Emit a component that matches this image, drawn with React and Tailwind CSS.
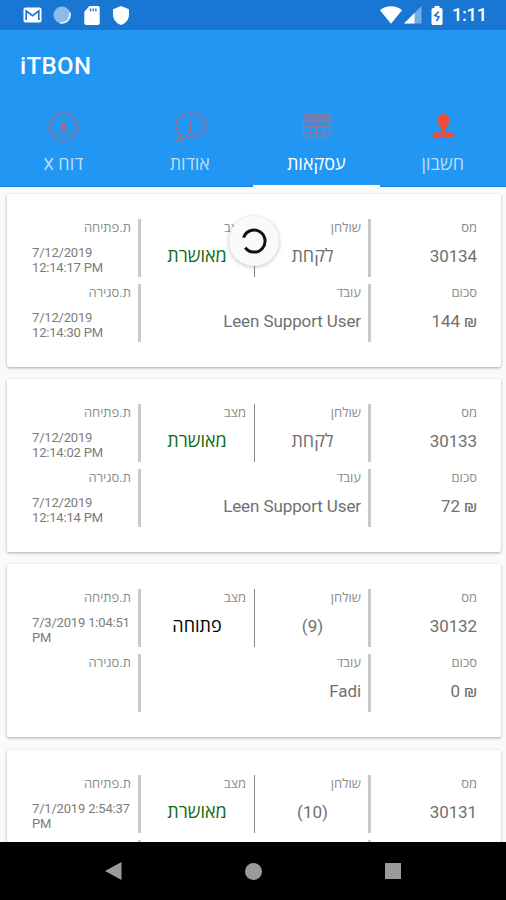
const transactions = [
  { id: "30134", table: "לקחת", status: "מאושרת", opened: ["7/12/2019", "12:14:17 PM"], closed: ["7/12/2019", "12:14:30 PM"], user: "Leen Support User", total: "144" },
  { id: "30133", table: "לקחת", status: "מאושרת", opened: ["7/12/2019", "12:14:02 PM"], closed: ["7/12/2019", "12:14:14 PM"], user: "Leen Support User", total: "72" },
  { id: "30132", table: "(9)", status: "פתוחה", opened: ["7/3/2019 1:04:51", "PM"], closed: [], user: "Fadi", total: "0" },
  { id: "30131", table: "(10)", status: "מאושרת", opened: ["7/1/2019 2:54:37", "PM"] },
]

function StatusBar() {
  return (
    <div className="flex h-[30px] shrink-0 items-center justify-between bg-[#1976d2] pl-[23px] pr-[20px] text-white">
      <div className="flex items-center gap-[11px]">
        {/* Mail */}
        <svg width="19" height="16" viewBox="0 0 19 16">
          <rect x="0.5" y="0.5" width="18" height="15" rx="2" fill="#fff" />
          <path d="M3.2 13V4l6.3 4.6L15.8 4v9" fill="none" stroke="#1976d2" strokeWidth="1.7" />
        </svg>
        <svg width="18" height="18" viewBox="0 0 18 18">
          <circle cx="9" cy="9" r="8.5" fill="#8bbbe9" />
          <path d="M16.6 6.5A8 8 0 0 1 7 16.6" fill="none" stroke="#e3effb" strokeWidth="1.8" />
        </svg>
        {/* SD card */}
        <svg className="ml-[2px]" width="16" height="19" viewBox="0 0 16 19">
          <path d="M5.5 0H14a1.7 1.7 0 0 1 1.7 1.7v15.6A1.7 1.7 0 0 1 14 19H2a1.7 1.7 0 0 1-1.7-1.7V5.7z" fill="#fff" />
          <path d="M6.500 2.500v2.800M9.200 2.500v2.800M11.900 2.500v2.800" stroke="#1976d2" strokeWidth="1.400" />
        </svg>
        <svg className="ml-[2px]" width="16" height="19" viewBox="0 0 16 19">
          <path d="M8 0l8 3.200v5.600c0 4.700-3.400 8.700-8 10.200-4.600-1.500-8-5.500-8-10.200V3.200z" fill="#fff" />
        </svg>
      </div>
      <div className="flex items-center">
        <svg width="22" height="18" viewBox="0 0 22 18">
          <path d="M0 4.200C3 1.600 6.700.2 11 .2s8 1.400 11 4L11 17.800z" fill="#fff" />
        </svg>
        <svg className="ml-[2px]" width="18" height="18" viewBox="0 0 18 18">
          <path d="M17.500 0v17.500H0z" fill="#76ade4" />
          <path d="M10.500 7v10.500H0z" fill="#fff" />
        </svg>
        {/* Battery */}
        <svg className="ml-[9px]" width="12" height="19" viewBox="0 0 12 19">
          <path d="M3.500 0h5v2H10a1.500 1.500 0 0 1 1.500 1.500v14A1.500 1.500 0 0 1 10 19H2a1.500 1.500 0 0 1-1.500-1.500v-14A1.500 1.500 0 0 1 2 2h1.500z" fill="#fff" />
          <path d="M7.800 5.500L3.800 9.500l4.200 1.500-2.500 4" fill="none" stroke="#1976d2" strokeWidth="1.600" />
        </svg>
        <span className="ml-[9px] w-[34px] whitespace-nowrap text-[18.5px] leading-[30px] font-medium tracking-[-0.4px]">1:11</span>
      </div>
    </div>
  )
}

function ReportIcon() {
  return (
    <svg width="30" height="30" viewBox="0 0 30 30" fill="none" stroke="#a96d85">
      <circle cx="15.500" cy="14.500" r="13.500" strokeWidth="1.500" />
      <path d="M12.200 9.500l6.600 10.500M19 9.500l-7 10.500" strokeWidth="2" />
      <path d="M10.800 9.300h3M17.500 9.300h2.800M10.800 20.200h2.800M17.200 20.200h3.200" strokeWidth="1.200" />
    </svg>
  )
}

function AboutIcon() {
  return (
    <svg width="32" height="30" viewBox="0 0 32 30" fill="none" stroke="#a96d85">
      <path d="M6.500 22.800C3.300 20.500 1.600 17.600 1.600 14 1.600 6.600 8 1.300 16.200 1.300S30.800 6.600 30.800 13.500 24.500 25.300 16.500 25.300c-1.500 0-3 0-4.400-.4-2.700 2.400-6 3.200-10 3.500 2.700-1.300 4-3 4.400-5.600z" strokeWidth="1.500" />
      <circle cx="16.400" cy="9.500" r="1.600" fill="#a96d85" stroke="none" />
      <path d="M14.800 13.200h1.700v7M14.500 20.200h4" strokeWidth="1.800" />
    </svg>
  )
}

function TableIcon() {
  return (
    <svg width="30" height="30" viewBox="0 0 30 30" fill="none" stroke="#8b7ba5">
      <rect x="2.500" y="3" width="26.500" height="22.500" rx="1.500" strokeWidth="1.300" />
      <path d="M3 3.500h25.500v5.500H3z" fill="#727fb5" stroke="none" />
      <path d="M3 9.500h26M3 14.700h26M3 20h26M9 9.500v16M15.700 9.500v16M22.300 9.500v16" strokeWidth="1.300" />
      <path d="M8 14.700h2M14.700 14.700h2M21.300 14.700h2M8 20h2M14.700 20h2M21.300 20h2" stroke="#a96d85" strokeWidth="1.600" />
    </svg>
  )
}

function AccountIcon() {
  return (
    <svg width="30" height="30" viewBox="0 0 30 30" fill="#e94f3a">
      <path d="M15.500 2c3.600 0 5.800 2.500 5.800 6 0 3.300-1.500 6.300-3.300 8.300v3c0 .8.600 1.400 1.500 1.700h-8c.9-.3 1.500-.9 1.500-1.700v-3C11.200 14.300 9.700 11.300 9.700 8c0-3.500 2.200-6 5.800-6z" />
      <path d="M4 26c0-3.800 2.300-5.400 6.700-5.900 1.300 1.800 2.900 2.500 4.800 2.500s3.500-.7 4.800-2.500c4.400.5 6.700 2.100 6.700 5.900z" />
    </svg>
  )
}

const tabs = [
  { label: <><span>דוח </span><span className="text-[17px] font-normal">X</span></>, key: "report", icon: <ReportIcon /> },
  { label: "אודות", key: "about", icon: <AboutIcon /> },
  { label: "עסקאות", key: "transactions", icon: <TableIcon />, active: true },
  { label: "חשבון", key: "account", icon: <AccountIcon /> },
]

function Header() {
  return (
    <header className="relative z-10 h-[157px] shrink-0 border-b border-[#1480e8] bg-[#2196f3]">
      <h1 className="h-[73px] pl-[20px] text-[24px] leading-[72px] font-medium tracking-[0.4px] text-white">iTBON</h1>
      <nav className="grid h-[85px] grid-cols-4">
        {tabs.map((tab) => (
          <button key={tab.key} className={`flex flex-col items-center border-b-[3px] pt-[9px] ${tab.active ? "border-white text-white" : "border-transparent text-[#b9defb]"}`}>
            {tab.icon}
            <span dir="rtl" className="mt-[9px] text-[18px] leading-[26px] font-medium">{tab.label}</span>
          </button>
        ))}
      </nav>
    </header>
  )
}

function Label({ children }) {
  return <div dir="rtl" className="h-[18px] text-[13px] leading-[18px] text-[#8c8c8c]">{children}</div>
}

function Value({ children }) {
  return <div className="pt-[6px] text-[17px] leading-[26px] tracking-[-0.1px] text-[#707070]">{children}</div>
}

function DateCell({ label, lines }) {
  return (
    <div className="border-r-[3px] border-[#cacaca] pr-[7px]">
      <Label>{label}</Label>
      <div className="pt-[8px] text-[13px] leading-[15px] tracking-[-0.18px] whitespace-nowrap text-[#7c7c7c]">
        {lines.map((line) => <div key={line}>{line}</div>)}
      </div>
    </div>
  )
}

function TransactionCard({ item }) {
  const statusColor = item.status === "פתוחה" ? "text-black" : "text-[#106b10]"
  const tableSize = item.table.startsWith("(") ? "text-[17px]" : "text-[18px]"

  return (
    <article className="h-[173px] shrink-0 rounded-[2px] bg-white pt-[25px] pr-[24px] pl-[25px] shadow-[0_1px_3px_rgba(0,0,0,0.32)]">
      <div className="grid h-[58px] grid-cols-[109px_114px_116px_1fr]">
        <DateCell label="ת.פתיחה" lines={item.opened} />
        <div className="border-r border-[#888] pr-[8px]">
          <Label>מצב</Label>
          <div className={`pt-[6px] pl-[7px] text-center text-[18px] leading-[26px] ${statusColor}`}>{item.status}</div>
        </div>
        <div className="border-r-[3px] border-[#cacaca] pr-[7px]">
          <Label>שולחן</Label>
          <div className={`pt-[6px] pl-[9px] text-center leading-[26px] text-[#707070] ${tableSize}`}>{item.table}</div>
        </div>
        <div className="text-right">
          <Label>מס</Label>
          <Value>{item.id}</Value>
        </div>
      </div>
      {item.user ? (
        <div className="mt-[7px] grid h-[58px] grid-cols-[109px_230px_1fr]">
          <DateCell label="ת.סגירה" lines={item.closed} />
          <div className="border-r-[3px] border-[#cacaca] pr-[7px] text-right">
            <Label>עובד</Label>
            <Value>{item.user}</Value>
          </div>
          <div className="text-right">
            <Label>סכום</Label>
            <Value>{item.total} ₪</Value>
          </div>
        </div>
      ) : (
        <div className="mt-[7px] grid h-[58px] grid-cols-[109px_230px_1fr]">
          <div className="border-r-[3px] border-[#cacaca]" />
          <div className="border-r-[3px] border-[#cacaca]" />
        </div>
      )}
    </article>
  )
}

export default function App() {
  return (
    <div className="relative flex h-[900px] w-[506px] flex-col overflow-hidden bg-[#fafafa] font-[Roboto,'Open_Sans',sans-serif]">
      <StatusBar />
      <Header />
      <main className="flex min-h-0 flex-1 flex-col gap-[12.2px] overflow-hidden pt-[7px] pr-[5px] pl-[7px]">
        {transactions.map((item) => <TransactionCard key={item.id} item={item} />)}
      </main>

      {/* Refresh spinner floats over the list */}
      <div className="absolute top-[216px] left-[229px] flex h-[50px] w-[50px] items-center justify-center rounded-full bg-[#fafafa] shadow-[0_1px_4px_rgba(0,0,0,0.25)]">
        <svg width="28" height="28" viewBox="0 0 28 28" fill="none" stroke="#111" strokeWidth="3">
          <path d="M3.600 10.600A11 11 0 1 1 5.200 20.600" />
        </svg>
      </div>

      <nav className="grid h-[58px] shrink-0 grid-cols-[226px_54px_226px] items-center bg-black">
        <svg className="ml-[105px]" width="17" height="18" viewBox="0 0 17 18"><path d="M16.500 0v18L0 9z" fill="#9b9b9b" /></svg>
        <span className="h-[17px] w-[17px] justify-self-center rounded-full bg-[#9b9b9b]" />
        <span className="ml-[105px] h-[16px] w-[16px] bg-[#9b9b9b]" />
      </nav>
    </div>
  )
}
